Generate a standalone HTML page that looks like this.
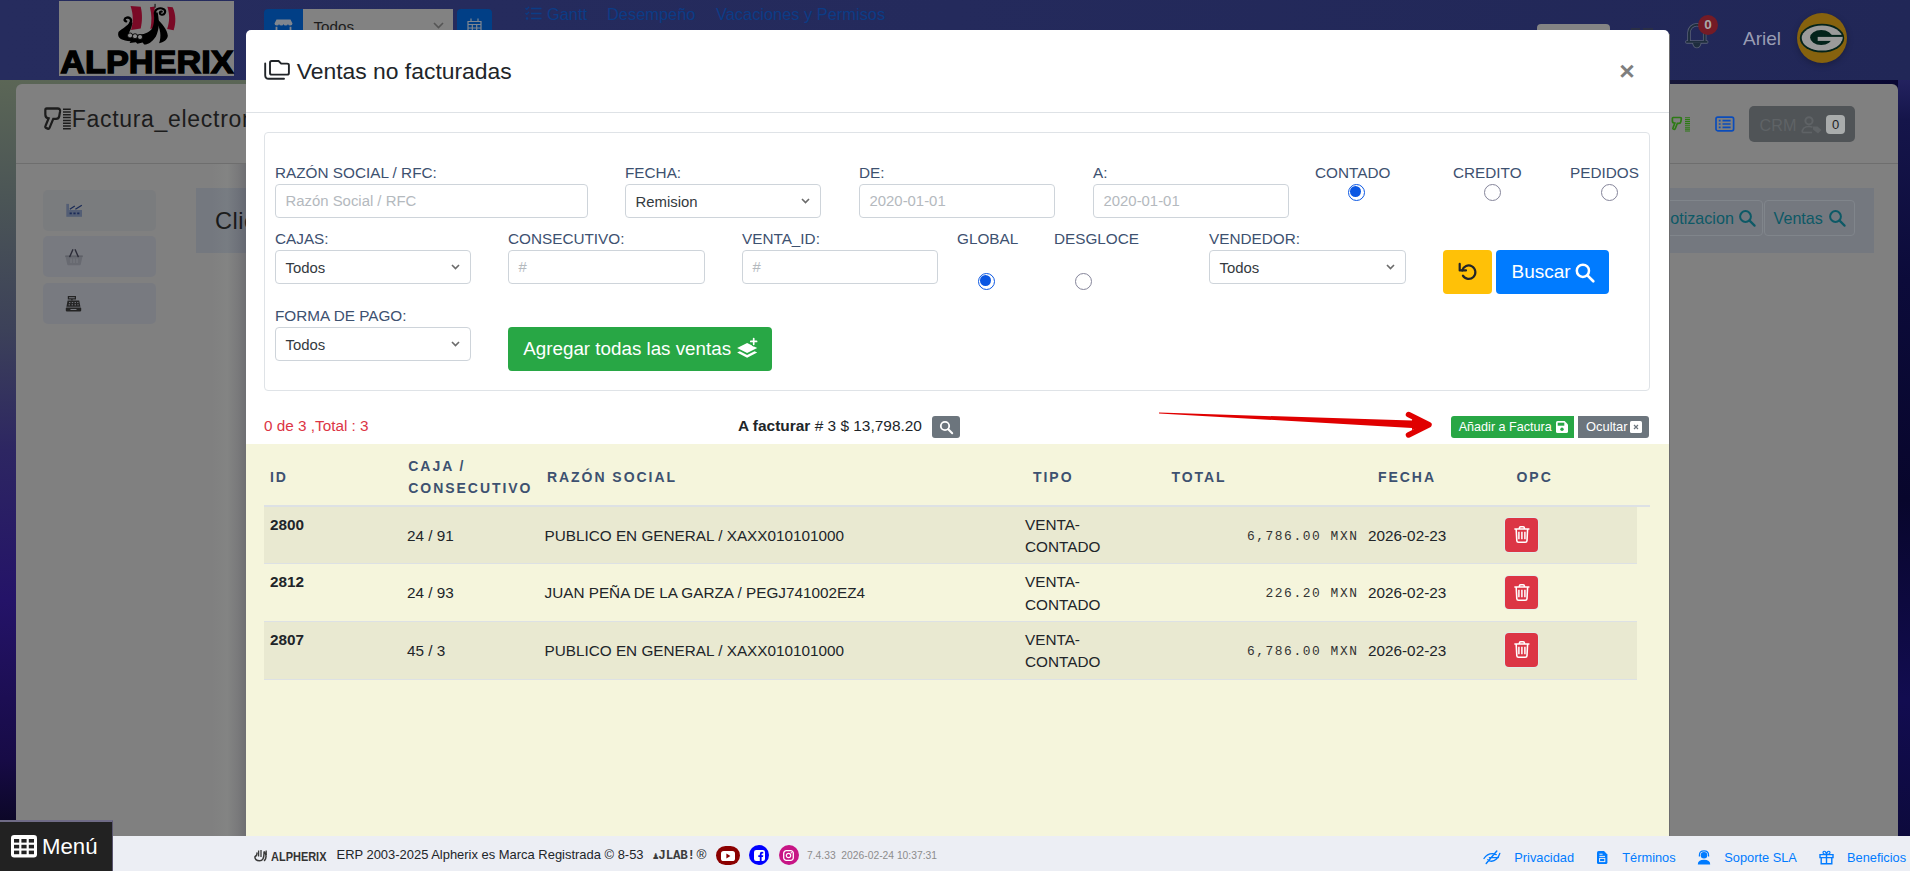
<!DOCTYPE html>
<html lang="es">
<head>
<meta charset="utf-8">
<title>Ventas no facturadas</title>
<style>
*{box-sizing:border-box;margin:0;padding:0}
html,body{width:1910px;height:871px;overflow:hidden}
body{font-family:"Liberation Sans",Arial,sans-serif;font-size:15px;color:#212529;background:#0c0a32;position:relative}
.abs{position:absolute}
#bg{left:0;top:0;width:1910px;height:871px;background:
 linear-gradient(90deg,rgba(0,0,0,0) 0%,rgba(8,6,50,.0) 30%,rgba(8,6,50,1) 100%),
 linear-gradient(180deg,#5b6656 80px,#4b5556 200px,#3c4159 330px,#2d2662 450px,#241368 600px,#170b46 760px,#090620 836px);}
#bgR{left:1898px;top:80px;width:12px;height:760px;background:linear-gradient(180deg,#23225f 0,#15154a 40px,#0c0b3a 200px,#08062c 420px,#120c50 620px,#0d0a3c 760px)}
#hdr{left:0;top:0;width:1910px;height:80px;background:linear-gradient(90deg,#262c5e 0%,#242a5c 50%,#212757 100%)}
#logo{left:59px;top:1px;width:175px;height:75px;background:#808080}
#main{left:16px;top:84px;width:1882px;height:760px;background:#808080;border-radius:6px}
#mainhd{left:16px;top:163px;width:1882px;height:1px;background:#6e6e6e}
#modal{left:246px;top:30px;width:1423px;height:850px;background:#fff;border-radius:5px 5px 0 0;overflow:hidden}
#mhd{left:0;top:82px;width:1423px;height:1px;background:#dee2e6}
#beige{left:0;top:414px;width:1423px;height:440px;background:#f5f5dc}
#card{left:18px;top:102px;width:1386px;height:259px;border:1px solid #dfe3e7;border-radius:4px}
#foot{left:0;top:836px;width:1910px;height:35px;background:#eceef4}
#menu{left:0;top:820px;width:113px;height:51px;background:#222;border-top:2px solid #6f6b86;border-right:1.5px solid #5a5670}

#mi{left:-246px;top:-30px;width:1910px;height:900px}
.lbl{position:absolute;color:#3d5170;font-size:15.3px;line-height:18px;white-space:nowrap;margin-top:-.5px}
.fc{position:absolute;height:33.5px;border:1px solid #ced4da;border-radius:4px;background:#fff;font-size:14.9px;line-height:32.5px;padding-left:9.5px;color:#343a40;white-space:nowrap}
.fc.ph{color:#b4b9be}
.fc.se{line-height:34.5px}
.fc svg{position:absolute;right:10px;top:13px}
.rad{position:absolute;width:17px;height:17px;border-radius:50%;border:1.3px solid #85859a;background:#fff}
.rad.on{border:1.6px solid #0b57e3}
.rad.on:after{content:"";position:absolute;left:1.4px;top:1.4px;width:11px;height:11px;border-radius:50%;background:#0b57e3}
.btn{position:absolute;border-radius:4px;color:#fff;white-space:nowrap}
#mtitle{left:296.7px;top:56.5px;font-size:22.9px;line-height:28px;color:#212529;white-space:nowrap}
#mclose{left:1617px;top:54px;width:20px;font-size:26.500px;line-height:34px;font-weight:700;color:#7e7e7e;text-align:center}

.bt{position:absolute;color:#fff;white-space:nowrap}
#st1{left:264px;top:417px;color:#dc3545;font-size:15.3px;line-height:18px}
#st2{left:738px;top:417px;color:#212529;font-size:15.45px;line-height:18px;white-space:nowrap}
.th{position:absolute;color:#3d5170;font-weight:700;font-size:14px;letter-spacing:1.95px;line-height:22.4px;white-space:nowrap;margin-top:.1px}
.row{position:absolute;left:264px;width:1373px;height:57.6px;border-top:1px solid #dde1e4}
.row.s{background:#e9e9d1}
.td{position:absolute;font-size:15.3px;line-height:22.8px;color:#212529;white-space:nowrap}
.td.b{font-weight:700}
.td.m{font-family:"Liberation Mono","DejaVu Sans Mono",monospace;font-size:12.900px;letter-spacing:1.560px;color:#333;text-align:right;width:130px}
.tr{position:absolute;left:1505.3px;width:32.6px;height:33.6px;margin-top:.4px;background:#dc3545;border-radius:4px;box-shadow:0 0 0 1px rgba(222,238,240,.75)}
.tr svg{position:absolute;left:8.500px;top:7px}

.hl{position:absolute;top:5px;font-size:16.4px;line-height:19px;color:#0c3c86;white-space:nowrap}
.sb{position:absolute;left:43px;width:113px;height:41px;border-radius:5px;background:#787a80}
.tl{position:absolute;color:#0d5966;font-size:16.1px;line-height:20px;white-space:nowrap}
.fl{position:absolute;top:850px;font-size:12.8px;line-height:16px;color:#007bff;white-space:nowrap}
</style>
</head>
<body>
<div id="bg" class="abs"></div>
<div id="bgR" class="abs"></div>
<div id="hdr" class="abs"></div>
<div id="logo" class="abs"></div>

<svg class="abs" style="left:55px;top:0" width="185" height="80" viewBox="0 0 1910 826">
<g fill="#7a0a26"><path d="M780 62 L885 70 C905 150 900 230 885 295 L785 310 C810 230 810 150 780 62Z"/><path d="M980 75 L1030 68 L1020 290 L985 300 C1000 220 1000 150 980 75Z"/><path d="M1160 70 L1215 75 C1250 150 1250 240 1225 312 L1158 300 C1185 220 1185 150 1160 70Z"/></g>
<path d="M1033 40 V80" stroke="#000" stroke-width="10"/>
<path d="M655 330 C700 290 750 270 772 225 L800 235 C792 290 772 320 760 345 C850 372 950 360 1000 300 C1020 260 1030 200 1018 128 L1060 128 C1078 220 1078 300 1040 380 C1000 440 950 465 920 460 L905 440 L850 452 L835 435 L770 445 L780 425 C700 420 635 400 655 330Z" fill="#000"/>
<path d="M778 240 C798 200 772 175 742 182 C715 188 710 215 735 220" fill="none" stroke="#000" stroke-width="24" stroke-linecap="round"/>
<path d="M1034 140 C1025 95 1080 72 1122 95 C1152 115 1132 162 1095 150 C1073 141 1080 115 1102 120" fill="none" stroke="#000" stroke-width="22" stroke-linecap="round"/>
<path d="M1050 190 C1100 240 1160 300 1165 370 C1160 410 1120 440 1075 447 C1100 380 1090 290 1045 230Z" fill="#000"/>
<g fill="#8c8c8c" stroke="#000" stroke-width="9"><circle cx="775" cy="366" r="26"/><circle cx="826" cy="374" r="26"/><circle cx="878" cy="382" r="26"/></g>
</svg>
<svg class="abs" style="left:59px;top:46px" width="176" height="30" viewBox="0 0 176 30"><text x="1.2" y="27.2" font-family="Liberation Sans,Arial,sans-serif" font-weight="700" font-size="31.2" textLength="173.4" lengthAdjust="spacingAndGlyphs" fill="#000" stroke="#000" stroke-width="1.3" stroke-linejoin="miter">ALPHERIX</text></svg>
<div class="abs" style="left:264px;top:9px;width:39px;height:40px;background:#013f86;border-radius:4px 0 0 4px"><svg style="position:absolute;left:10px;top:9px" width="19" height="16" viewBox="0 0 19 16"><path d="M2.5 1.5 H16.5 L18.5 5.5 Q18.5 7.6 16.2 7.6 Q14.2 7.6 14 6 Q13.7 7.6 11.6 7.6 Q9.7 7.6 9.5 6 Q9.3 7.6 7.4 7.6 Q5.3 7.6 5 6 Q4.8 7.6 2.8 7.6 Q0.5 7.6 0.5 5.5Z" fill="#80868f"/><path d="M2.5 8.8 V16 M16.5 8.8 V16" stroke="#80868f" stroke-width="1.8"/></svg></div>
<div class="abs" style="left:303px;top:9px;width:150px;height:40px;background:#828282;font-size:15.2px;line-height:36px;padding-left:10.5px;color:#1c1c1c">Todos<svg style="position:absolute;left:130px;top:13px" width="11" height="7" viewBox="0 0 11 7"><path d="M1 1 L5.5 5.5 L10 1" fill="none" stroke="#555" stroke-width="1.6"/></svg></div>
<div class="abs" style="left:457px;top:9px;width:35px;height:40px;background:#013f86;border-radius:4px"><svg style="position:absolute;left:10px;top:9px" width="15" height="16" viewBox="0 0 15 16"><path d="M1 3.5 H14 V15 H1Z M1 6.5 H14 M1 10 H14 M5.3 6.5 V15 M9.7 6.5 V15 M4 0.5 V3.5 M11 0.5 V3.5" fill="none" stroke="#7f8691" stroke-width="1.2"/></svg></div>
<svg class="abs" style="left:525px;top:6px" width="17" height="15" viewBox="0 0 17 15"><path d="M6 2.5 H16.5 M6 7.5 H16.5 M6 12.5 H16.5" stroke="#0c3c86" stroke-width="1.7"/><path d="M0.5 2 L1.8 3.4 L4 0.8 M0.5 7 L1.8 8.4 L4 5.8" fill="none" stroke="#0c3c86" stroke-width="1.2"/><circle cx="2" cy="12.5" r="1.2" fill="#0c3c86"/></svg>
<div class="hl" style="left:547px">Gantt</div><div class="hl" style="left:607px">Desempeño</div><div class="hl" style="left:716px">Vacaciones y Permisos</div>
<div class="abs" style="left:1537px;top:23.800px;width:73px;height:30px;background:#848484;border-radius:4px"></div>
<div class="abs" style="left:1631px;top:28px;width:8.500px;height:10px;background:#2a2f46"></div><div class="abs" style="left:1643px;top:28px;width:9.500px;height:10px;background:#2a2f46"></div>
<svg class="abs" style="left:1685px;top:22px" width="25" height="27" viewBox="0 0 25 27"><path d="M1.9 19.9 H21.700 M4 19.900 V10.600 A7.850 7.850 0 0 1 19.700 10.600 V19.900" fill="none" stroke="#596076" stroke-width="3.500" stroke-linecap="round"/><path d="M7 20.500 H16.700 Q15.800 26.300 11.850 26.300 Q7.900 26.300 7 20.500Z" fill="#596076"/><path d="M1.9 19.9 H21.700 M4 19.900 V10.600 A7.850 7.850 0 0 1 19.700 10.600 V19.900" fill="none" stroke="#1e2d3e" stroke-width="1.900" stroke-linecap="round"/><path d="M8 20.700 H15.700 Q15 25.400 11.850 25.400 Q8.700 25.400 8 20.700Z" fill="#1e2d3e"/></svg>
<div class="abs" style="left:1698px;top:15.400px;width:20px;height:20px;border-radius:50%;background:#741b26;color:#a9a9a9;font-size:13.500px;font-weight:700;line-height:19.500px;text-align:center">0</div>
<div class="abs" style="left:1743px;top:27.7px;font-size:19px;line-height:22px;color:#999cb3">Ariel</div>
<div class="abs" style="left:1797px;top:13px;width:50px;height:50px;border-radius:50%;background:#86620e;box-shadow:0 2px 6px rgba(0,0,0,.25)"></div>
<svg class="abs" style="left:1797px;top:13px" width="50" height="50" viewBox="0 0 50 50"><defs><clipPath id="gw"><ellipse cx="25" cy="25.100" rx="20.600" ry="12.800"/></clipPath></defs><ellipse cx="25" cy="25.100" rx="22.200" ry="14.400" fill="#03231a"/><ellipse cx="25" cy="25.100" rx="20.300" ry="12.500" fill="#9b9b9b"/><ellipse cx="24.200" cy="24.500" rx="11.100" ry="7.500" fill="#03231a"/><g clip-path="url(#gw)"><rect x="30" y="21.900" width="17" height="2.100" fill="#03231a"/><rect x="20.700" y="23.900" width="26" height="4" fill="#9b9b9b"/></g></svg>
<div id="main" class="abs"></div>
<div id="mainhd" class="abs"></div>

<svg class="abs" style="left:43px;top:105.900px" width="21" height="25" viewBox="0 0 18 20" preserveAspectRatio="none"><path d="M3.2 2 H12.5 Q15 2 14.6 4.5 L13.9 8.2 Q13.5 10.3 11.2 10.3 H8.8 L5.6 17.5 Q5.1 18.6 4 18.1 L2.6 17.5 Q1.6 17 2.1 16 L4.8 10 Q2 9.5 2 6.8 V3.2 Q2 2 3.2 2Z" fill="none" stroke="#1c1c1c" stroke-width="1.900"/></svg><svg class="abs" style="left:63px;top:108px" width="8" height="22" viewBox="0 0 8 22"><path d="M0 1.200H7.800M0 4H7.800M0 6.800H7.800M0 9.600H7.800M0 12.400H7.800M0 15.200H7.800M0 18H7.800M0 20.800H7.800" stroke="#1c1c1c" stroke-width="1.500"/></svg>
<div class="abs" style="left:71.700px;top:105px;font-size:23px;line-height:28px;color:#1c1c1c;white-space:nowrap;letter-spacing:.7px">Factura_electronica</div>
<svg class="abs" style="left:1671px;top:116px" width="20" height="16" viewBox="0 0 20 16"><path d="M2.2 1.5 H9 Q10.6 1.5 10.3 3.1 L9.8 5.8 Q9.5 7.3 8 7.3 H6.4 L4.2 12.8 Q3.9 13.6 3.1 13.3 L2.3 13 Q1.6 12.7 1.9 12 L3.8 7.2 Q1.4 7 1.4 5 V2.3 Q1.4 1.5 2.2 1.5Z" fill="none" stroke="#2c7a14" stroke-width="1.7"/><path d="M14 1.7H19M14 3.6H19M14 5.5H19M14 7.4H19M14 9.3H19M14 11.2H19M14 13.1H19M14 15H19" stroke="#2c7a14" stroke-width="1.1"/></svg>
<svg class="abs" style="left:1715px;top:116px" width="20" height="16" viewBox="0 0 20 16"><rect x="1" y="1.2" width="17.6" height="13.6" rx="1.8" fill="none" stroke="#0b4cba" stroke-width="1.7"/><path d="M7.5 4.6H15.6M7.5 8H15.6M7.5 11.4H15.6" stroke="#0b4cba" stroke-width="1.7"/><path d="M3.8 4.6H5.6M3.8 8H5.6M3.8 11.4H5.6" stroke="#0b4cba" stroke-width="1.7"/></svg>
<div class="abs" style="left:1749px;top:106px;width:106px;height:36px;border-radius:5px;background:#505457"></div>
<div class="abs" style="left:1759.5px;top:113.5px;font-size:16.2px;line-height:22px;color:#5f6366">CRM</div>
<svg class="abs" style="left:1800.5px;top:115.5px" width="22" height="18" viewBox="0 0 22 18"><circle cx="8" cy="4.8" r="3.6" fill="none" stroke="#5f6366" stroke-width="2"/><path d="M1.2 16.5 Q1.2 10.5 8 10.5 Q10 10.5 11.5 11.2" fill="none" stroke="#5f6366" stroke-width="1.6"/><path d="M1.2 16.5 H11" stroke="#5f6366" stroke-width="1.6"/><path d="M12 10.5 H16.5 L20.5 14 L17 17.5 L12 13.5Z" fill="#5f6366"/></svg>
<div class="abs" style="left:1826px;top:115px;width:19px;height:19px;border-radius:4px;background:#a9acac;font-size:13px;line-height:19px;text-align:center;color:#1e1e1e;font-weight:400">0</div>
<div class="sb" style="top:189.5px;background:#7a7c7e"></div><div class="sb" style="top:236px"></div><div class="sb" style="top:283px"></div>
<svg class="abs" style="left:66px;top:203px" width="17" height="14" viewBox="0 0 17 14"><path d="M0.3 0.9 H3 V13.8 H0.3Z" fill="#535e75"/><path d="M3 7 H16 V13.800 H3Z" fill="#535e75"/><path d="M3.800 6.200 L8.800 3 M9.400 6.200 L15.800 2.200" stroke="#1b2b57" stroke-width="1.300"/><path d="M3.600 10.400h2.200M7.400 10.400h2.200M11.200 10.400h2.200" stroke="#1b2b57" stroke-width="1.700"/></svg>
<svg class="abs" style="left:65px;top:249px" width="18" height="17" viewBox="0 0 18 17"><path d="M0.300 6.600 H17.700 L15.800 15.200 Q15.600 16.200 14.600 16.200 H3.400 Q2.400 16.200 2.200 15.200Z" fill="#686a71"/><path d="M0.300 6.600H17.700V8H0.300Z" fill="#5e6067"/><path d="M4.800 7.600 L7.800 0.800 M13.200 7.600 L10.200 0.800" stroke="#2c2c38" stroke-width="1.400" stroke-linecap="round"/><path d="M6 9.600V14M9 9.600V14M12 9.600V14" stroke="#787a80" stroke-width="1.100"/></svg>
<svg class="abs" style="left:65px;top:296px" width="17" height="16" viewBox="0 0 17 16"><path d="M3.4 0.6 H10.4 V2.8 H3.4Z" fill="none" stroke="#242424" stroke-width="1.2"/><path d="M6.9 3V4.6" stroke="#242424" stroke-width="1.4"/><path d="M2.6 4.6 H14.2 L15.4 10.8 H1.4Z" fill="#242424"/><rect x="0.8" y="11.6" width="15.4" height="3.8" rx=".8" fill="#242424"/><path d="M4 6.6h1.4M6.8 6.6h1.4M9.6 6.6h1.4M12.2 6.6h1.2M3.6 8.8h1.4M6.6 8.8h1.4M9.6 8.8h1.4M12.4 8.8h1.2" stroke="#787a80" stroke-width="1"/><path d="M5.5 13.5h6" stroke="#787a80" stroke-width="1"/></svg>
<div class="abs" style="left:196px;top:188px;width:1678px;height:65px;background:#74787f"></div>
<div class="abs" style="left:215px;top:207px;font-size:23.600px;line-height:28px;color:#161616;white-space:nowrap;letter-spacing:.5px">Clientes</div>
<div class="abs" style="left:1640px;top:200px;width:123px;height:36px;border:1px solid #80858b;border-radius:4px"></div>
<div class="abs" style="left:1764px;top:200px;width:91px;height:36px;border:1px solid #80858b;border-radius:4px"></div>
<div class="tl" style="left:1658.7px;top:208px">Cotizacion</div>
<svg class="abs" style="left:1738px;top:209px" width="19" height="19" viewBox="0 0 19 19"><circle cx="7.5" cy="7.5" r="5.4" fill="none" stroke="#0d5966" stroke-width="2"/><path d="M11.6 11.6 L16.6 16.6" stroke="#0d5966" stroke-width="2.2" stroke-linecap="round"/></svg>
<div class="tl" style="left:1773.6px;top:208px">Ventas</div>
<svg class="abs" style="left:1828px;top:209px" width="19" height="19" viewBox="0 0 19 19"><circle cx="7.5" cy="7.5" r="5.4" fill="none" stroke="#0d5966" stroke-width="2"/><path d="M11.6 11.6 L16.6 16.6" stroke="#0d5966" stroke-width="2.2" stroke-linecap="round"/></svg>
<div class="abs" style="left:212px;top:164px;width:34px;height:672px;background:linear-gradient(90deg,rgba(200,220,200,0) 0%,rgba(200,220,200,.045) 45%,rgba(40,42,60,.07) 75%,rgba(40,42,60,.2) 100%)"></div>
<div class="abs" style="left:1669px;top:34px;width:1px;height:802px;background:#6c6c6e"></div>
<div id="modal" class="abs">
<div id="mhd" class="abs"></div>
<div id="beige" class="abs"></div>
<div id="card" class="abs"></div>
<div id="mi" class="abs">
<div id="mtitle" class="abs">Ventas no facturadas</div>
<svg class="abs" style="left:263px;top:58px" width="28" height="24" viewBox="0 0 28 24"><path d="M2.2 5.5 V17.2 Q2.2 20.7 5.7 20.7 H21" fill="none" stroke="#212529" stroke-width="1.9" stroke-linecap="round"/><path d="M8.7 16.6 H24.2 Q25.9 16.6 25.9 14.9 V7.3 Q25.9 5.6 24.2 5.6 H18.2 L15.6 3 H8.7 Q7 3 7 4.7 V14.9 Q7 16.6 8.7 16.6 Z" fill="none" stroke="#212529" stroke-width="1.9" stroke-linejoin="round"/></svg>
<div id="mclose" class="abs">×</div>
<div class="lbl" style="left:275px;top:164px">RAZÓN SOCIAL / RFC:</div>
<div class="fc ph" style="left:275px;top:184px;width:313px">Razón Social / RFC</div>
<div class="lbl" style="left:625px;top:164px">FECHA:</div>
<div class="fc se" style="left:625px;top:184px;width:196px">Remision<svg width="9" height="6" viewBox="0 0 9 6"><path d="M1 1 L4.5 4.600 L8 1" fill="none" stroke="#6b6b6b" stroke-width="1.600"/></svg></div>
<div class="lbl" style="left:859px;top:164px">DE:</div>
<div class="fc ph" style="left:859px;top:184px;width:196px">2020-01-01</div>
<div class="lbl" style="left:1093px;top:164px">A:</div>
<div class="fc ph" style="left:1093px;top:184px;width:196px">2020-01-01</div>
<div class="lbl" style="left:1315px;top:164px">CONTADO</div>
<div class="rad on" style="left:1348px;top:184px"></div>
<div class="lbl" style="left:1453px;top:164px">CREDITO</div>
<div class="rad" style="left:1484px;top:184px"></div>
<div class="lbl" style="left:1570px;top:164px">PEDIDOS</div>
<div class="rad" style="left:1601px;top:184px"></div>
<div class="lbl" style="left:275px;top:230px">CAJAS:</div>
<div class="fc se" style="left:275px;top:250px;width:196px">Todos<svg width="9" height="6" viewBox="0 0 9 6"><path d="M1 1 L4.5 4.600 L8 1" fill="none" stroke="#6b6b6b" stroke-width="1.600"/></svg></div>
<div class="lbl" style="left:508px;top:230px">CONSECUTIVO:</div>
<div class="fc ph" style="left:508px;top:250px;width:197px">#</div>
<div class="lbl" style="left:742px;top:230px">VENTA_ID:</div>
<div class="fc ph" style="left:742px;top:250px;width:196px">#</div>
<div class="lbl" style="left:957px;top:230px">GLOBAL</div>
<div class="rad on" style="left:978px;top:273px"></div>
<div class="lbl" style="left:1054px;top:230px">DESGLOCE</div>
<div class="rad" style="left:1075px;top:273px"></div>
<div class="lbl" style="left:1209px;top:230px">VENDEDOR:</div>
<div class="fc se" style="left:1209px;top:250px;width:197px">Todos<svg width="9" height="6" viewBox="0 0 9 6"><path d="M1 1 L4.5 4.600 L8 1" fill="none" stroke="#6b6b6b" stroke-width="1.600"/></svg></div>
<div class="lbl" style="left:275px;top:307px">FORMA DE PAGO:</div>
<div class="fc se" style="left:275px;top:327px;width:196px">Todos<svg width="9" height="6" viewBox="0 0 9 6"><path d="M1 1 L4.5 4.600 L8 1" fill="none" stroke="#6b6b6b" stroke-width="1.600"/></svg></div>
<div class="bt" style="left:1443px;top:250px;width:49px;height:44px;background:#ffc107;border-radius:4px"><svg style="position:absolute;left:14px;top:11px" width="22" height="22" viewBox="0 0 22 22"><path d="M5.2 9.5 A6.7 6.7 0 1 1 5.9 14.6" fill="none" stroke="#212529" stroke-width="2.2" stroke-linecap="round"/><path d="M2.7 2.9 V9.4 H9" fill="none" stroke="#212529" stroke-width="2.2" stroke-linecap="round" stroke-linejoin="round"/></svg></div>
<div class="bt" style="left:1496px;top:250px;width:113px;height:44px;background:#007bff;border-radius:4px;font-size:19px;line-height:44px;padding-left:15.5px">Buscar<svg style="position:absolute;left:77px;top:10.5px" width="24" height="24" viewBox="0 0 24 24"><circle cx="9.9" cy="9.8" r="6.1" fill="none" stroke="#fff" stroke-width="2.5"/><path d="M14.4 14.4 L20.3 20.3" stroke="#fff" stroke-width="2.7" stroke-linecap="round"/></svg></div>
<div class="bt" style="left:508px;top:327px;width:264px;height:44px;background:#28a745;border-radius:4px;font-size:18.8px;line-height:44px;padding-left:15.3px">Agregar todas las ventas<svg style="position:absolute;left:228px;top:10px" width="24" height="24" viewBox="0 0 24 24"><path d="M1.1 11 L11.1 6.1 L21.2 11 L11.1 15.9Z" fill="#fff"/><path d="M1.1 15.6 L3.8 14.3 L11.1 17.9 L18.5 14.3 L21.2 15.6 L11.1 20.8Z" fill="#fff"/><path d="M17.7 1.3 V7.5 M14.6 4.4 H20.8" stroke="#28a745" stroke-width="3.8" stroke-linecap="round"/><path d="M17.7 1.5 V7.3 M14.8 4.4 H20.6" stroke="#fff" stroke-width="1.7" stroke-linecap="round"/></svg></div>
<div id="st1" class="abs">0 de 3 ,Total : 3</div>
<div id="st2" class="abs"><b>A facturar</b> # 3 $ 13,798.20</div>
<div class="bt" style="left:932px;top:416px;width:28px;height:22px;background:#6c757d;border-radius:3px"><svg style="position:absolute;left:7px;top:4px" width="15" height="15" viewBox="0 0 15 15"><circle cx="6" cy="6" r="4.2" fill="none" stroke="#fff" stroke-width="1.8"/><path d="M9.2 9.2 L13.2 13.2" stroke="#fff" stroke-width="2" stroke-linecap="round"/></svg></div>
<svg class="abs" style="left:1150px;top:405px" width="290" height="40" viewBox="0 0 290 40"><path d="M9 7.6 L262 15.5 L262 23 L9 8.4 Z" fill="#e00000"/><path d="M258.5 9.5 L279 19.8 L258.5 30" fill="none" stroke="#e00000" stroke-width="5.5" stroke-linecap="round" stroke-linejoin="round"/><path d="M262 14 L279 19.8 L262 25Z" fill="#e00000"/></svg>
<div class="bt" style="left:1451px;top:416px;width:123px;height:22px;background:#28a745;border-radius:3px 0 0 3px;font-size:12.6px;line-height:22px;padding-left:7.7px">Añadir a Factura<svg style="position:absolute;left:104.5px;top:5px" width="12" height="12" viewBox="0 0 12 12"><path d="M1.6 0H8.6L12 3.4V10.4Q12 12 10.4 12H1.6Q0 12 0 10.4V1.6Q0 0 1.6 0Z" fill="#fff"/><rect x="1.7" y="1.7" width="6.6" height="3" fill="#28a745"/><circle cx="6" cy="8.3" r="1.7" fill="#28a745"/></svg></div>
<div class="bt" style="left:1578px;top:416px;width:71px;height:22px;background:#6c757d;border-radius:0 3px 3px 0;font-size:12.9px;line-height:22px;padding-left:8px">Ocultar<svg style="position:absolute;left:52px;top:5px" width="12" height="12" viewBox="0 0 12 12"><rect width="12" height="12" rx="1.6" fill="#fff"/><path d="M4 4L8 8M8 4L4 8" stroke="#6c757d" stroke-width="1.2"/></svg></div>
<div class="th" style="left:270px;top:465.5px">ID</div>
<div class="th" style="left:408.3px;top:454.5px">CAJA /<br>CONSECUTIVO</div>
<div class="th" style="left:547px;top:465.5px">RAZÓN SOCIAL</div>
<div class="th" style="left:1033px;top:465.5px">TIPO</div>
<div class="th" style="left:1171.5px;top:465.5px">TOTAL</div>
<div class="th" style="left:1378px;top:465.5px">FECHA</div>
<div class="th" style="left:1516.5px;top:465.5px">OPC</div>
<div class="abs" style="left:264px;top:505px;width:1386px;height:2px;background:#dde1e5"></div>
<div class="row s" style="top:505.8px"></div>
<div class="td b" style="left:270px;top:513.5px">2800</div><div class="td" style="left:407px;top:524.8px">24 / 91</div><div class="td" style="left:544.5px;top:524.8px">PUBLICO EN GENERAL / XAXX010101000</div><div class="td" style="left:1025px;top:513.5px">VENTA-<br>CONTADO</div><div class="td m" style="left:1228.500px;top:525.6px">6,786.00 MXN</div><div class="td" style="left:1368px;top:524.8px">2026-02-23</div><div class="tr" style="top:517.7px"><svg width="16" height="19" viewBox="0 0 16 19"><path d="M0.9 4H14.9M5.4 3.8V2.9Q5.4 1.7 6.6 1.7H9.2Q10.4 1.7 10.4 2.9V3.8M2.2 4.4L2.8 15.6Q2.9 17.2 4.5 17.2H11.300Q12.900 17.200 13 15.600L13.6 4.400" fill="none" stroke="#fff" stroke-width="1.55" stroke-linecap="round" stroke-linejoin="round"/><path d="M4.900 6.800V14.200M7.900 6.800V14.200M10.900 6.800V14.200" fill="none" stroke="#fff" stroke-width="1.500"/></svg></div>
<div class="row" style="top:563.4px"></div>
<div class="td b" style="left:270px;top:571.1px">2812</div><div class="td" style="left:407px;top:582.4px">24 / 93</div><div class="td" style="left:544.5px;top:582.4px">JUAN PEÑA DE LA GARZA / PEGJ741002EZ4</div><div class="td" style="left:1025px;top:571.1px">VENTA-<br>CONTADO</div><div class="td m" style="left:1228.500px;top:583.2px">226.20 MXN</div><div class="td" style="left:1368px;top:582.4px">2026-02-23</div><div class="tr" style="top:575.3px"><svg width="16" height="19" viewBox="0 0 16 19"><path d="M0.9 4H14.9M5.4 3.8V2.9Q5.4 1.7 6.6 1.7H9.2Q10.4 1.7 10.4 2.9V3.8M2.2 4.4L2.8 15.6Q2.9 17.2 4.5 17.2H11.300Q12.900 17.200 13 15.600L13.6 4.400" fill="none" stroke="#fff" stroke-width="1.55" stroke-linecap="round" stroke-linejoin="round"/><path d="M4.900 6.800V14.200M7.900 6.800V14.200M10.900 6.800V14.200" fill="none" stroke="#fff" stroke-width="1.500"/></svg></div>
<div class="row s" style="top:621.0px"></div>
<div class="td b" style="left:270px;top:628.7px">2807</div><div class="td" style="left:407px;top:640.0px">45 / 3</div><div class="td" style="left:544.5px;top:640.0px">PUBLICO EN GENERAL / XAXX010101000</div><div class="td" style="left:1025px;top:628.7px">VENTA-<br>CONTADO</div><div class="td m" style="left:1228.500px;top:640.8px">6,786.00 MXN</div><div class="td" style="left:1368px;top:640.0px">2026-02-23</div><div class="tr" style="top:632.9px"><svg width="16" height="19" viewBox="0 0 16 19"><path d="M0.9 4H14.9M5.4 3.8V2.9Q5.4 1.7 6.6 1.7H9.2Q10.4 1.7 10.4 2.9V3.8M2.2 4.4L2.8 15.6Q2.9 17.2 4.5 17.2H11.300Q12.900 17.200 13 15.600L13.6 4.400" fill="none" stroke="#fff" stroke-width="1.55" stroke-linecap="round" stroke-linejoin="round"/><path d="M4.900 6.800V14.200M7.900 6.800V14.200M10.900 6.800V14.200" fill="none" stroke="#fff" stroke-width="1.500"/></svg></div>
<div class="abs" style="left:264px;top:678.6px;width:1373px;height:1px;background:#dde1e4"></div>
</div>
</div>
<div id="foot" class="abs"></div>
<div id="menu" class="abs"></div>

<svg class="abs" style="left:11px;top:835px" width="26" height="23" viewBox="0 0 26 23"><rect width="26" height="22.4" rx="3.2" fill="#fff"/><g fill="#222"><rect x="3" y="4" width="5.2" height="3.6"/><rect x="10.4" y="4" width="5.2" height="3.6"/><rect x="17.8" y="4" width="5.2" height="3.6"/><rect x="3" y="9.8" width="5.2" height="3.6"/><rect x="10.4" y="9.8" width="5.2" height="3.6"/><rect x="17.8" y="9.8" width="5.2" height="3.6"/><rect x="3" y="15.6" width="5.2" height="3.6"/><rect x="10.4" y="15.6" width="5.2" height="3.6"/><rect x="17.8" y="15.6" width="5.2" height="3.6"/></g></svg>
<div class="abs" style="left:42px;top:834px;font-size:22.2px;line-height:26px;color:#fff">Menú</div>
<svg class="abs" style="left:254px;top:848px" width="14" height="15" viewBox="0 0 14 15"><path d="M1.2 8.5 C2.5 7.8 3.2 6.5 3 5 M1 8.5 C0.6 11 2.5 12.8 5.5 12.8 C8.5 12.8 10.3 10.5 10 4 M10.8 4 C12.5 7 12.5 10 10.5 12.5" fill="none" stroke="#3a3a3a" stroke-width="1.5" stroke-linecap="round"/><path d="M4.6 2.5 V8.5 M7 2 V9 M12.2 2.5 V7" stroke="#3a3a3a" stroke-width="1.3"/></svg>
<svg class="abs" style="left:271px;top:850px" width="57" height="13" viewBox="0 0 57 13"><text x="0" y="11" font-family="Liberation Sans,Arial,sans-serif" font-weight="700" font-size="12.6" textLength="55.5" lengthAdjust="spacingAndGlyphs" fill="#333">ALPHERIX</text></svg>
<div class="abs" style="left:336.5px;top:846.5px;font-size:12.95px;line-height:16px;color:#212529;white-space:nowrap">ERP 2003-2025 Alpherix es Marca Registrada © 8-53</div>
<div class="abs" style="left:652.5px;top:848px;font-size:12.5px;line-height:16px;font-weight:700;color:#3c3c3c;letter-spacing:-.2px;font-family:'Liberation Mono','DejaVu Sans Mono',monospace;white-space:nowrap"><span style="font-size:10px">&#9823;</span>JLAB!</div>
<div class="abs" style="left:696.500px;top:847.300px;font-size:13.500px;line-height:16px;color:#212529">®</div>
<div class="abs" style="left:716px;top:846px;width:24px;height:19px;border-radius:9.5px;background:#8b0000"><svg style="position:absolute;left:5px;top:4.5px" width="14" height="10" viewBox="0 0 14 10"><rect width="14" height="10" rx="2.6" fill="#fff"/><path d="M5.4 2.6 L9.4 5 L5.4 7.4Z" fill="#8b0000"/></svg></div>
<div class="abs" style="left:749px;top:845.2px;width:20px;height:20px;border-radius:50%;background:#0000ff"><svg style="position:absolute;left:4.5px;top:4.5px" width="11" height="11" viewBox="0 0 11 11"><rect width="11" height="11" rx="2.2" fill="#fff"/><path d="M7.6 11 V7 H9 L9.3 5.2 H7.6 V4.2 Q7.6 3.4 8.5 3.4 H9.3 V1.9 Q8.6 1.8 7.9 1.8 Q5.8 1.8 5.8 4 V5.2 H4.3 V7 H5.8 V11Z" fill="#0000ff"/></svg></div>
<div class="abs" style="left:778.800px;top:845.300px;width:20px;height:20px;border-radius:50%;background:#c71585"><svg style="position:absolute;left:4.5px;top:4.5px" width="11" height="11" viewBox="0 0 11 11"><rect x=".7" y=".7" width="9.6" height="9.6" rx="2.6" fill="none" stroke="#fff" stroke-width="1.3"/><circle cx="5.5" cy="5.5" r="2.2" fill="none" stroke="#fff" stroke-width="1.2"/><circle cx="8.3" cy="2.7" r=".7" fill="#fff"/></svg></div>
<div class="abs" style="left:807px;top:848.900px;font-size:10.300px;line-height:13px;color:#8c8c8c;white-space:pre">7.4.33  2026-02-24 10:37:31</div>
<svg class="abs" style="left:1483px;top:850px" width="18" height="15" viewBox="0 0 18 15"><path d="M1 8.5 C3.5 4.5 7 3.6 9.5 3.6 C11 3.6 12.2 4 13.2 4.6 M16.8 3.4 C15.5 8 12 11.2 8.5 11.2 C6.8 11.2 5.6 10.6 4.8 9.8 M3.2 13.5 L13.8 1 M6.4 7.6 H15.4" fill="none" stroke="#007bff" stroke-width="1.4" stroke-linecap="round"/></svg>
<div class="fl" style="left:1514.3px">Privacidad</div>
<svg class="abs" style="left:1597px;top:851px" width="11" height="13" viewBox="0 0 11 13"><path d="M1.6 0 H7 L10.4 3.4 V11.4 Q10.4 13 8.8 13 H1.6 Q0 13 0 11.400 V1.6 Q0 0 1.600 0Z" fill="#007bff"/><path d="M2.4 3.200H5.600M2.400 5.400H8" stroke="#eceef4" stroke-width="1"/><rect x="2.6" y="7.400" width="5.2" height="3.200" fill="none" stroke="#eceef4" stroke-width="1"/></svg>
<div class="fl" style="left:1622.3px">Términos</div>
<svg class="abs" style="left:1697px;top:850px" width="14" height="15" viewBox="0 0 14 15"><circle cx="7" cy="5.200" r="3.300" fill="#007bff"/><path d="M2.400 6.400 V5.200 Q2.400 0.800 7 0.800 Q11.600 0.800 11.600 5.200 V6.400" fill="none" stroke="#007bff" stroke-width="1.200"/><path d="M0.800 14.400 Q0.800 9.800 7 9.800 Q13.200 9.800 13.200 14.400Z" fill="#007bff"/></svg>
<div class="fl" style="left:1724.3px">Soporte SLA</div>
<svg class="abs" style="left:1819px;top:850px" width="15" height="15" viewBox="0 0 15 15"><path d="M1 4.600 H14 V7.600 H1Z M2.200 7.600 V13.800 H12.800 V7.600 M7.500 4.600 V13.800" fill="none" stroke="#007bff" stroke-width="1.400"/><path d="M7.500 4.400 C5 4.400 3.400 3.400 4.200 1.800 C5.200 0.400 7.200 1.800 7.500 4.400 C7.800 1.800 9.800 0.400 10.800 1.800 C11.600 3.400 10 4.400 7.500 4.400Z" fill="none" stroke="#007bff" stroke-width="1.200"/></svg>
<div class="fl" style="left:1847px">Beneficios</div>
</body>
</html>
